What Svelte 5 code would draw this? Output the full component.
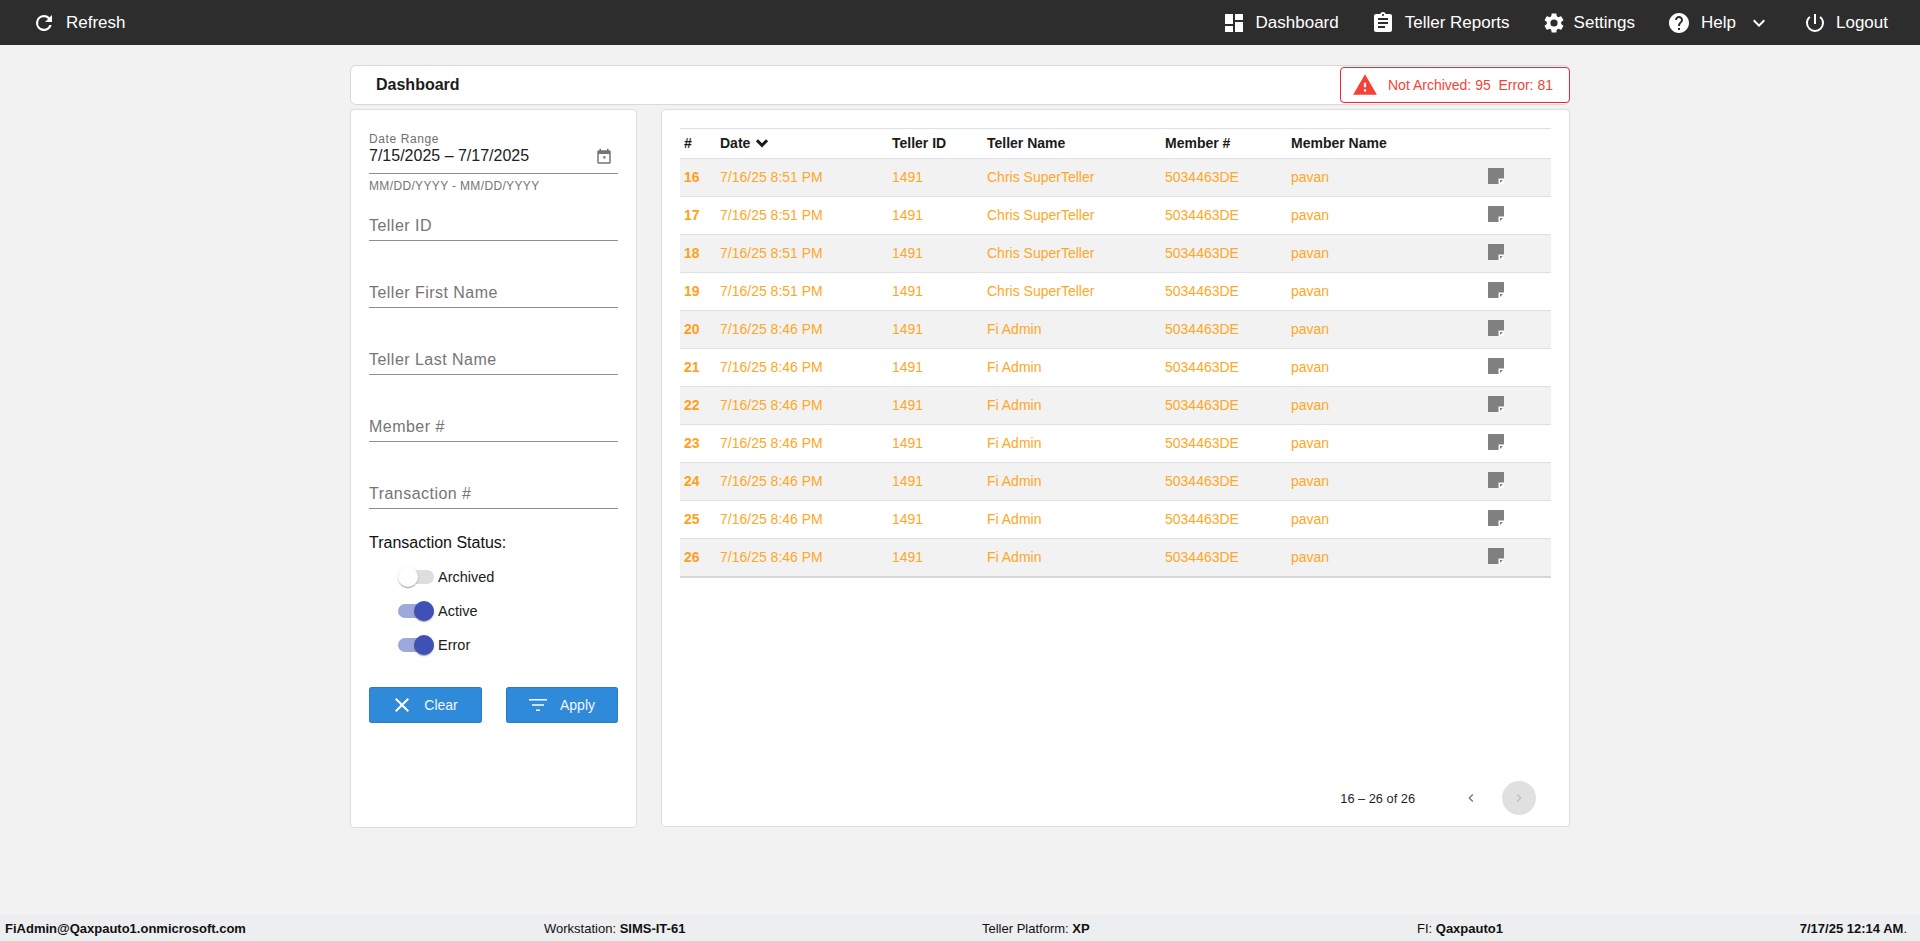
<script>
  const fields = ['Teller ID', 'Teller First Name', 'Teller Last Name', 'Member #', 'Transaction #'];
  const toggles = [
    { label: 'Archived', on: false },
    { label: 'Active', on: true },
    { label: 'Error', on: true }
  ];
  const rows = [
    [16, '7/16/25 8:51 PM', 'Chris SuperTeller'],
    [17, '7/16/25 8:51 PM', 'Chris SuperTeller'],
    [18, '7/16/25 8:51 PM', 'Chris SuperTeller'],
    [19, '7/16/25 8:51 PM', 'Chris SuperTeller'],
    [20, '7/16/25 8:46 PM', 'Fi Admin'],
    [21, '7/16/25 8:46 PM', 'Fi Admin'],
    [22, '7/16/25 8:46 PM', 'Fi Admin'],
    [23, '7/16/25 8:46 PM', 'Fi Admin'],
    [24, '7/16/25 8:46 PM', 'Fi Admin'],
    [25, '7/16/25 8:46 PM', 'Fi Admin'],
    [26, '7/16/25 8:46 PM', 'Fi Admin']
  ];
</script>

<div class="page">
  <header class="topbar">
    <div class="nav-item refresh">
      <svg viewBox="0 0 24 24" width="24" height="24"><path fill="#fff" d="M17.65 6.35A7.96 7.96 0 0 0 12 4a8 8 0 1 0 7.73 10h-2.5A5.7 5.7 0 1 1 12 6.3c1.6 0 3 .65 4 1.7L13 11h7V4l-2.35 2.35z"/></svg>
      <span>Refresh</span>
    </div>
    <nav class="nav-right">
      <div class="nav-item">
        <svg viewBox="0 0 24 24" width="24" height="24"><path fill="#fff" d="M3 13h8V3H3v10zm0 8h8v-6H3v6zm10 0h8V11h-8v10zm0-18v6h8V3h-8z"/></svg>
        <span>Dashboard</span>
      </div>
      <div class="nav-item">
        <svg viewBox="0 0 24 24" width="24" height="24"><path fill="#fff" d="M19 3h-4.18C14.4 1.84 13.3 1 12 1s-2.4.84-2.82 2H5c-1.1 0-2 .9-2 2v14c0 1.1.9 2 2 2h14c1.1 0 2-.9 2-2V5c0-1.1-.9-2-2-2zm-7 0c.55 0 1 .45 1 1s-.45 1-1 1-1-.45-1-1 .45-1 1-1zm2 14H7v-2h7v2zm3-4H7v-2h10v2zm0-4H7V7h10v2z"/></svg>
        <span>Teller Reports</span>
      </div>
      <div class="nav-item settings">
        <svg viewBox="0 0 24 24" width="24" height="24"><path fill="#fff" d="M19.14 12.94c.04-.3.06-.61.06-.94 0-.32-.02-.64-.07-.94l2.03-1.58a.49.49 0 0 0 .12-.61l-1.92-3.32a.49.49 0 0 0-.59-.22l-2.39.96c-.5-.38-1.03-.7-1.62-.94l-.36-2.54a.48.48 0 0 0-.48-.41h-3.84a.48.48 0 0 0-.47.41l-.36 2.54c-.59.24-1.13.57-1.62.94l-2.39-.96a.49.49 0 0 0-.59.22L2.74 8.87a.48.48 0 0 0 .12.61l2.03 1.58c-.05.3-.09.63-.09.94s.02.64.07.94l-2.03 1.58a.49.49 0 0 0-.12.61l1.92 3.32c.12.22.37.29.59.22l2.39-.96c.5.38 1.03.7 1.62.94l.36 2.54c.05.24.24.41.48.41h3.84c.24 0 .44-.17.47-.41l.36-2.54c.59-.24 1.13-.56 1.62-.94l2.39.96c.22.08.47 0 .59-.22l1.92-3.32a.48.48 0 0 0-.12-.61l-2.01-1.58zM12 15.6A3.6 3.6 0 1 1 12 8.4a3.6 3.6 0 0 1 0 7.2z"/></svg>
        <span>Settings</span>
      </div>
      <div class="nav-item">
        <svg viewBox="0 0 24 24" width="24" height="24"><path fill="#fff" d="M12 2C6.48 2 2 6.48 2 12s4.48 10 10 10 10-4.48 10-10S17.52 2 12 2zm1 17h-2v-2h2v2zm2.07-7.75-.9.92C13.45 12.9 13 13.5 13 15h-2v-.5c0-1.1.45-2.1 1.17-2.83l1.24-1.26c.37-.36.59-.86.59-1.41 0-1.1-.9-2-2-2s-2 .9-2 2H8c0-2.21 1.79-4 4-4s4 1.79 4 4c0 .88-.36 1.68-.93 2.25z"/></svg>
        <span>Help</span>
        <svg class="chev" viewBox="0 0 24 24" width="24" height="24"><path fill="#fff" d="M7.41 8.59 12 13.17l4.59-4.58L18 10l-6 6-6-6z"/></svg>
      </div>
      <div class="nav-item logout">
        <svg viewBox="0 0 24 24" width="24" height="24"><path fill="#fff" d="M13 3h-2v10h2V3zm4.83 2.17-1.42 1.42A6.92 6.92 0 0 1 19 12a7 7 0 1 1-14 0c0-2.17.99-4.1 2.58-5.42L6.17 5.17A8.932 8.932 0 0 0 3 12a9 9 0 0 0 18 0c0-2.74-1.23-5.18-3.17-6.83z"/></svg>
        <span>Logout</span>
      </div>
    </nav>
  </header>

  <main class="content">
    <div class="title-bar">
      <h1>Dashboard</h1>
      <div class="alert">
        <svg viewBox="0 0 24 24" width="26" height="26"><path fill="#f44336" d="M1 21h22L12 2 1 21zm12-3h-2v-2h2v2zm0-4h-2v-4h2v4z"/></svg>
        <span>Not Archived: 95&nbsp; Error: 81</span>
      </div>
    </div>

    <div class="columns">
      <aside class="card filters">
        <div class="date-field">
          <div class="date-label">Date Range</div>
          <div class="date-value">
            <span>7/15/2025 – 7/17/2025</span>
            <svg viewBox="0 0 24 24" width="18" height="18"><path fill="#757575" d="M19 3h-1V1h-2v2H8V1H6v2H5a2 2 0 0 0-2 2v14a2 2 0 0 0 2 2h14a2 2 0 0 0 2-2V5a2 2 0 0 0-2-2zm0 16H5V8h14v11zm-8-8h3v3h-3z"/></svg>
          </div>
          <div class="hint">MM/DD/YYYY - MM/DD/YYYY</div>
        </div>

        {#each fields as f}
          <div class="text-field">{f}</div>
        {/each}

        <div class="status-title">Transaction Status:</div>
        <div class="toggles">
          {#each toggles as t}
            <div class="toggle-row">
              <span class="track" class:on={t.on}><span class="thumb"></span></span>
              <span class="toggle-label">{t.label}</span>
            </div>
          {/each}
        </div>

        <div class="actions">
          <button class="btn clear">
            <svg viewBox="0 0 24 24" width="24" height="24"><path fill="#fff" d="M19 6.41 17.59 5 12 10.59 6.41 5 5 6.41 10.59 12 5 17.59 6.41 19 12 13.41 17.59 19 19 17.59 13.41 12z"/></svg>
            <span>Clear</span>
          </button>
          <button class="btn apply">
            <svg viewBox="0 0 24 24" width="24" height="24"><path fill="#fff" d="M10 18h4v-1.5h-4V18zM3 6v1.5h18V6H3zm3 6.75h12v-1.5H6v1.5z"/></svg>
            <span>Apply</span>
          </button>
        </div>
      </aside>

      <section class="card results">
        <div class="table">
          <div class="row head">
            <div class="c-num">#</div>
            <div class="c-date">Date
              <svg viewBox="0 0 24 24" width="20" height="20"><path fill="#1a1a1a" d="M7.2 7.6 12 12.4l4.8-4.8L19.4 10 12 17.4 4.6 10z"/></svg>
            </div>
            <div class="c-id">Teller ID</div>
            <div class="c-name">Teller Name</div>
            <div class="c-mem">Member #</div>
            <div class="c-mname">Member Name</div>
            <div class="c-act"></div>
          </div>
          {#each rows as r, i}
            <div class="row body" class:shade={i % 2 === 0} class:last={i === rows.length - 1}>
              <div class="c-num strong">{r[0]}</div>
              <div class="c-date">{r[1]}</div>
              <div class="c-id">1491</div>
              <div class="c-name">{r[2]}</div>
              <div class="c-mem">5034463DE</div>
              <div class="c-mname">pavan</div>
              <div class="c-act">
                <svg viewBox="0 0 16 16" width="16" height="16"><path fill="#808080" d="M0 0h16v16H0z"/><path fill="#fff" d="M10.5 10.5H16V16h-5.5z"/><path fill="#808080" d="M12 12h3l-3 3z"/></svg>
              </div>
            </div>
          {/each}
        </div>
        <div class="paginator">
          <span class="range">16 – 26 of 26</span>
          <span class="page-btn">
            <svg viewBox="0 0 24 24" width="16" height="16"><path fill="#757575" d="M15.41 7.41 14 6l-6 6 6 6 1.41-1.41L10.83 12z"/></svg>
          </span>
          <span class="page-btn disabled">
            <svg viewBox="0 0 24 24" width="16" height="16"><path fill="#bdbdbd" d="M10 6 8.59 7.41 13.17 12l-4.58 4.59L10 18l6-6z"/></svg>
          </span>
        </div>
      </section>
    </div>
  </main>

  <footer class="footer">
    <div class="f-user"><b>FiAdmin@Qaxpauto1.onmicrosoft.com</b></div>
    <div class="f-ws">Workstation: <b>SIMS-IT-61</b></div>
    <div class="f-pl">Teller Platform: <b>XP</b></div>
    <div class="f-fi">FI: <b>Qaxpauto1</b></div>
    <div class="f-time"><b>7/17/25 12:14 AM</b>.</div>
  </footer>
</div>

<style>
  :global(body) {
    margin: 0;
    background: #f2f2f2;
    font-family: "Liberation Sans", Arial, sans-serif;
  }
  .page {
    height: 941px;
    display: flex;
    flex-direction: column;
    overflow: hidden;
  }
  .topbar {
    height: 45px;
    flex: none;
    background: #2d2d2d;
    color: #fff;
    display: flex;
    align-items: center;
    justify-content: space-between;
    padding: 0 32px;
    font-size: 17px;
  }
  .nav-item {
    display: flex;
    align-items: center;
    gap: 10px;
  }
  .settings { gap: 8px; }
  .logout { gap: 9px; }
  .nav-right {
    display: flex;
    align-items: center;
    gap: 32px;
  }
  .chev { margin-left: 1px; }
  .content {
    flex: 1;
    width: 1220px;
    margin: 20px 0 0 350px;
  }
  .title-bar {
    height: 38px;
    background: #fff;
    border: 1px solid #d9d9d9;
    border-radius: 6px;
    display: flex;
    align-items: center;
    justify-content: space-between;
  }
  h1 {
    margin: 0 0 0 25px;
    font-size: 16px;
    font-weight: 700;
    color: #1c1c1c;
  }
  .alert {
    width: 230px;
    height: 36px;
    box-sizing: border-box;
    border: 1px solid #f5222d;
    border-radius: 4px;
    background: #fff;
    color: #f44336;
    font-size: 14px;
    display: flex;
    align-items: center;
    gap: 10px;
    padding-left: 11px;
    margin-right: -1px;
  }
  .columns {
    display: flex;
    gap: 24px;
    margin-top: 4px;
  }
  .card {
    background: #fff;
    border: 1px solid #dedede;
    border-radius: 4px;
    box-sizing: border-box;
  }
  .filters {
    width: 287px;
    height: 719px;
    padding: 22px 18px 0;
    flex: none;
  }
  .date-field { height: 75px; }
  .date-label {
    font-size: 12px;
    line-height: 14px;
    color: #6f6f6f;
    letter-spacing: 0.6px;
  }
  .date-value {
    height: 27px;
    width: 249px;
    display: flex;
    align-items: flex-start;
    justify-content: space-between;
    border-bottom: 1px solid #8f8f8f;
    font-size: 16px;
    line-height: 20px;
    color: #202020;
  }
  .date-value svg { margin: 2px 5px 0 0; }
  .hint {
    font-size: 12px;
    line-height: 14px;
    margin-top: 5px;
    color: #757575;
    letter-spacing: 0.35px;
  }
  .text-field {
    height: 20px;
    width: 249px;
    padding: 9px 0 4px;
    margin-bottom: 33px;
    border-bottom: 1px solid #8f8f8f;
    font-size: 16px;
    line-height: 20px;
    color: #757575;
    letter-spacing: 0.47px;
  }
  .status-title {
    font-size: 16px;
    line-height: 20px;
    color: #111;
    margin-top: -9px;
  }
  .toggles {
    margin-top: 7px;
    padding-left: 29px;
    display: flex;
    flex-direction: column;
  }
  .toggle-row {
    height: 34px;
    display: flex;
    align-items: center;
    gap: 4px;
    font-size: 14.5px;
    color: #202020;
  }
  .track {
    width: 36px;
    height: 14px;
    border-radius: 7px;
    background: #dedede;
    position: relative;
    display: block;
  }
  .track.on { background: #9fa8da; }
  .thumb {
    position: absolute;
    top: -3px;
    left: 0;
    width: 20px;
    height: 20px;
    border-radius: 50%;
    background: #fff;
    box-shadow: 0 2px 1px -1px rgba(0,0,0,.2), 0 1px 1px rgba(0,0,0,.14), 0 1px 3px rgba(0,0,0,.12);
  }
  .track.on .thumb { left: 16px; background: #3f51b5; }
  .actions {
    display: flex;
    justify-content: space-between;
    width: 249px;
    margin-top: 25px;
  }
  .btn {
    width: 113px;
    height: 36px;
    border: none;
    border-radius: 3px;
    background: #2f8ada;
    box-shadow: inset 0 0 0 1px rgba(25,100,170,.35);
    color: #f2f7fc;
    font-family: "Liberation Sans", sans-serif;
    font-size: 14px;
    display: flex;
    align-items: center;
    justify-content: center;
    gap: 10px;
    padding: 0 3px 0 0;
  }
  .apply { width: 112px; }
  .results {
    width: 909px;
    height: 718px;
    padding: 18px 18px 0;
    flex: none;
    display: flex;
    flex-direction: column;
  }
  .table {
    border-top: 1px solid #dfe0e6;
    width: 871px;
    font-size: 14px;
  }
  .row {
    display: grid;
    grid-template-columns: 40px 172px 95px 178px 126px 197px 63px;
    align-items: center;
    height: 38px;
    padding-bottom: 1px;
    box-sizing: border-box;
    border-bottom: 1px solid #dfe0e6;
  }
  .row .c-num { padding-left: 4px; }
  .head {
    height: 30px;
    font-weight: 700;
    color: #1a1a1a;
  }
  .head .c-date { display: flex; align-items: center; gap: 2px; }
  .body { color: #ffa726; }
  .shade { background: #f2f2f2; }
  .last { border-bottom: 2px solid #d6d6d6; height: 39px; }
  .strong { font-weight: 700; color: #ff9f1a; }
  .c-act { display: flex; }
  .c-act svg { margin-top: -2px; }
  .paginator {
    margin-top: auto;
    height: 36px;
    margin-bottom: 10px;
    display: flex;
    align-items: center;
    justify-content: flex-end;
    padding-right: 15px;
    font-size: 12.8px;
    color: #1f1f1f;
  }
  .range { margin-right: 39px; }
  .page-btn {
    width: 34px;
    height: 34px;
    border-radius: 50%;
    display: flex;
    align-items: center;
    justify-content: center;
  }
  .page-btn.disabled { background: #e0e0e0; margin-left: 14px; }
  .footer {
    height: 26px;
    flex: none;
    background: #eceef0;
    display: grid;
    grid-template-columns: 539px 438px 435px 320px 1fr;
    align-items: center;
    font-size: 13px;
    color: #111;
    padding: 0 13px 0 5px;
    box-sizing: border-box;
  }
  .f-time { text-align: right; white-space: nowrap; }
</style>
